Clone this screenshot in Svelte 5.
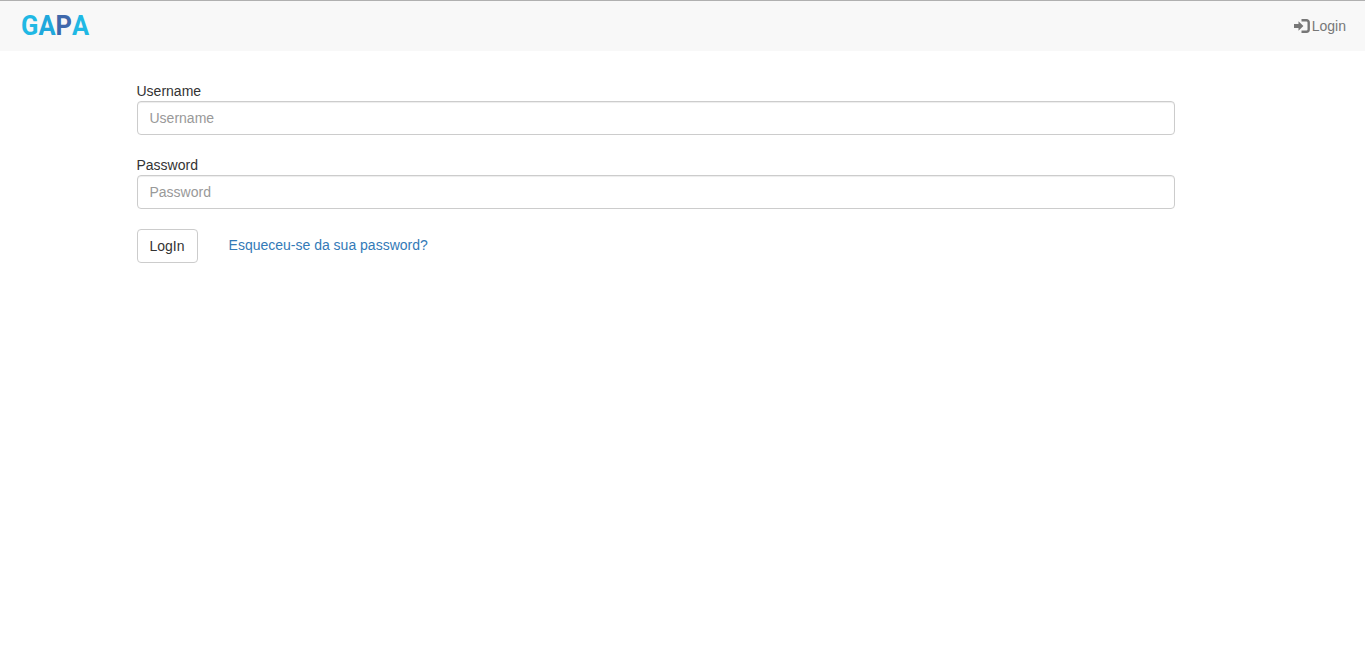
<script>
  let username = $state('');
  let password = $state('');
</script>

<nav class="navbar">
  <a class="brand" href="#top" aria-label="GAPA"><span class="c1">G</span><span class="c2">A</span><span class="c3">P</span><span class="c1">A</span></a>
  <a class="nav-login" href="#login">
    <svg class="icon" viewBox="0 0 16 14" width="16" height="14" aria-hidden="true">
      <path d="M0 5h4.5V2.2L9.4 7 4.5 11.8V9H0z" fill="#777" />
      <path d="M7.5 1.2h5A2.2 2.2 0 0 1 14.7 3.4v7.2a2.2 2.2 0 0 1-2.2 2.2h-5" fill="none" stroke="#777" stroke-width="2.4" />
    </svg>
    <span>Login</span>
  </a>
</nav>

<form class="form" onsubmit={(e) => e.preventDefault()}>
  <div class="group">
    <label for="username">Username</label>
    <input id="username" type="text" placeholder="Username" bind:value={username} />
  </div>
  <div class="group">
    <label for="password">Password</label>
    <input id="password" type="password" placeholder="Password" bind:value={password} />
  </div>
  <div class="actions">
    <button type="submit">LogIn</button>
    <a class="forgot" href="#forgot">Esqueceu-se da sua password?</a>
  </div>
</form>

<style>
  :global(body) {
    margin: 0;
    background: #fff;
    font-family: "Liberation Sans", Arial, sans-serif;
    font-size: 14px;
    line-height: 20px;
    color: #333;
  }
  .navbar {
    box-sizing: border-box;
    height: 51px;
    background: #f8f8f8;
    border-top: 1px solid #b0b0b0;
    display: flex;
    align-items: center;
    justify-content: space-between;
    padding: 0 19px 0 21px;
  }
  .brand {
    display: flex;
    text-decoration: none;
    font-family: Roboto, "Liberation Sans", sans-serif;
    font-weight: 700;
    font-size: 28px;
    line-height: 30px;
    transform: scaleX(0.91);
    transform-origin: left center;
  }
  .c1 { color: #20b8e4; }
  .c2 { color: #20a8dc; }
  .c3 { color: #3f68ab; }
  .nav-login {
    display: flex;
    align-items: center;
    gap: 2px;
    color: #777;
    text-decoration: none;
  }
  .icon { display: block; }
  .form {
    width: calc(76% + 1px);
    margin-left: 10%;
    padding-top: 30px;
  }
  .group {
    margin-bottom: 20px;
  }
  label {
    display: block;
    height: 20px;
    color: #333;
  }
  input {
    display: block;
    box-sizing: border-box;
    width: 100%;
    height: 34px;
    padding: 6px 12px;
    font: inherit;
    color: #555;
    background: #fff;
    border: 1px solid #ccc;
    border-radius: 4px;
    box-shadow: inset 0 1px 1px rgba(0, 0, 0, 0.075);
    outline: none;
  }
  input::placeholder {
    color: #999;
    opacity: 1;
  }
  .actions {
    display: flex;
    align-items: center;
    gap: 31px;
  }
  button {
    box-sizing: border-box;
    height: 34px;
    padding: 6px 12px;
    font: inherit;
    color: #333;
    background: #fff;
    border: 1px solid #ccc;
    border-radius: 4px;
    cursor: pointer;
  }
  .forgot {
    color: #337ab7;
    text-decoration: none;
    margin-top: -2px;
  }
</style>
